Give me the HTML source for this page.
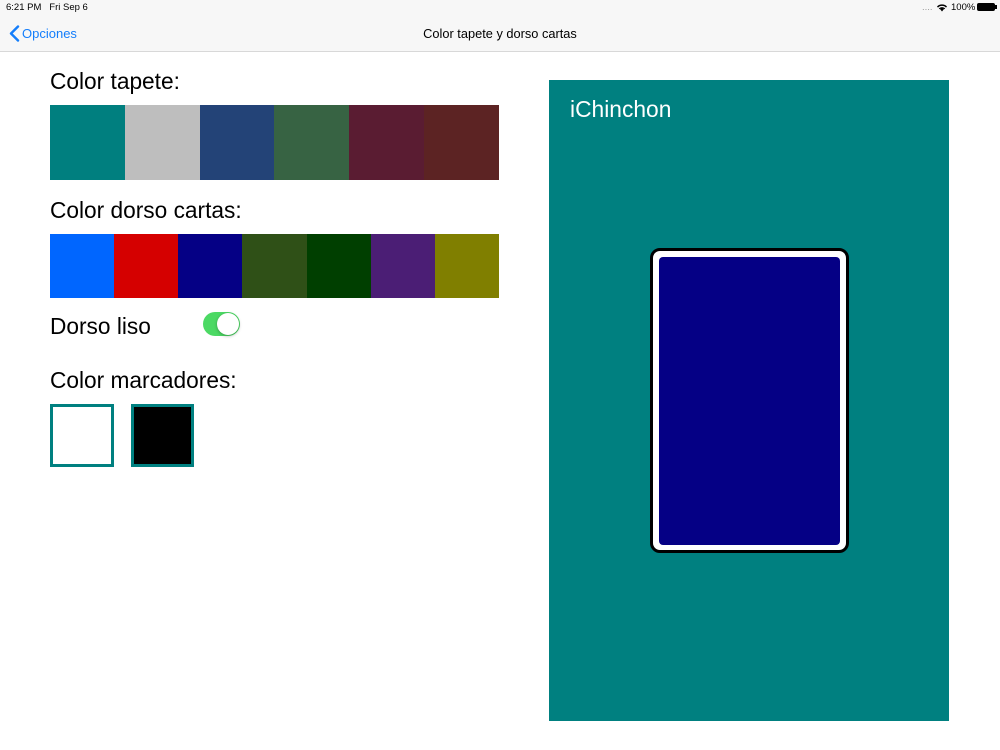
<!DOCTYPE html>
<html><head><style>
*{margin:0;padding:0;box-sizing:border-box}
body{width:1000px;height:750px;background:#fff;font-family:"Liberation Sans",sans-serif;position:relative;overflow:hidden}
.a{position:absolute}
.nav{left:0;top:0;width:1000px;height:52px;background:#f7f7f7;border-bottom:1px solid #d8d8d8}
.lbl{font-size:22.7px;color:#000;left:50px}
.row{display:flex;left:50px;width:449px}
.row div{flex:1}
</style></head><body>
<div class="a nav"></div>
<div class="a" style="left:6px;top:2px;font-size:9.5px">6:21 PM&nbsp;&nbsp;&nbsp;Fri Sep 6</div>
<div class="a" style="left:922px;top:2px;font-size:9.5px;color:#999">....</div>
<svg class="a" style="left:936px;top:3px" width="12" height="9" viewBox="0 0 12 9"><path d="M6 8.5L8 6A3 3 0 0 0 4 6Z M1 3.5A7 7 0 0 1 11 3.5L10 4.6A5.5 5.5 0 0 0 2 4.6Z M2.8 5.4A4.5 4.5 0 0 1 9.2 5.4L8.4 6.3A3.3 3.3 0 0 0 3.6 6.3Z" fill="#000"/></svg>
<div class="a" style="left:951px;top:2px;font-size:9.5px">100%</div>
<div class="a" style="left:977px;top:3px;width:18px;height:8px;background:#000;border-radius:2px"></div>
<div class="a" style="left:995px;top:5px;width:1.5px;height:4px;background:#000"></div>
<svg class="a" style="left:9px;top:25px" width="11" height="17" viewBox="0 0 11 17"><path d="M9 1.5L2 8.5L9 15.5" stroke="#147efb" stroke-width="2.4" fill="none" stroke-linecap="round" stroke-linejoin="round"/></svg>
<div class="a" style="left:22px;top:26px;font-size:13px;color:#147efb">Opciones</div>
<div class="a" style="left:0;width:1000px;top:26px;font-size:12.8px;text-align:center;font-weight:500">Color tapete y dorso cartas</div>

<div class="a lbl" style="top:68px">Color tapete:</div>
<div class="a row" style="top:105px;height:75px"><div style="background:#007f7f"></div><div style="background:#bebebe"></div><div style="background:#234377"></div><div style="background:#376343"></div><div style="background:#5a1c32"></div><div style="background:#5c2323"></div></div>
<div class="a lbl" style="top:197px">Color dorso cartas:</div>
<div class="a row" style="top:234px;height:64px"><div style="background:#0066ff"></div><div style="background:#d50000"></div><div style="background:#050085"></div><div style="background:#2f5017"></div><div style="background:#003f00"></div><div style="background:#4b1e75"></div><div style="background:#807f00"></div></div>
<div class="a lbl" style="top:313px">Dorso liso</div>
<div class="a" style="left:203px;top:312px;width:37px;height:24px;border-radius:12px;background:#4cd964"></div>
<div class="a" style="left:217px;top:313px;width:22px;height:22px;border-radius:50%;background:#fff;box-shadow:0 1px 3px rgba(0,0,0,.3)"></div>
<div class="a lbl" style="top:367px">Color marcadores:</div>
<div class="a" style="left:50px;top:404px;width:64px;height:63px;border:3px solid #008080;background:#fff"></div>
<div class="a" style="left:131px;top:404px;width:63px;height:63px;border:3px solid #008080;background:#000"></div>

<div class="a" style="left:549px;top:80px;width:400px;height:641px;background:#008080"></div>
<div class="a" style="left:570px;top:96px;font-size:22.8px;color:#fff">iChinchon</div>
<div class="a" style="left:650px;top:248px;width:199px;height:305px;background:#fff;border:3px solid #000;border-radius:10px"></div>
<div class="a" style="left:659px;top:257px;width:181px;height:288px;background:#050085;border-radius:4px"></div>
</body></html>
